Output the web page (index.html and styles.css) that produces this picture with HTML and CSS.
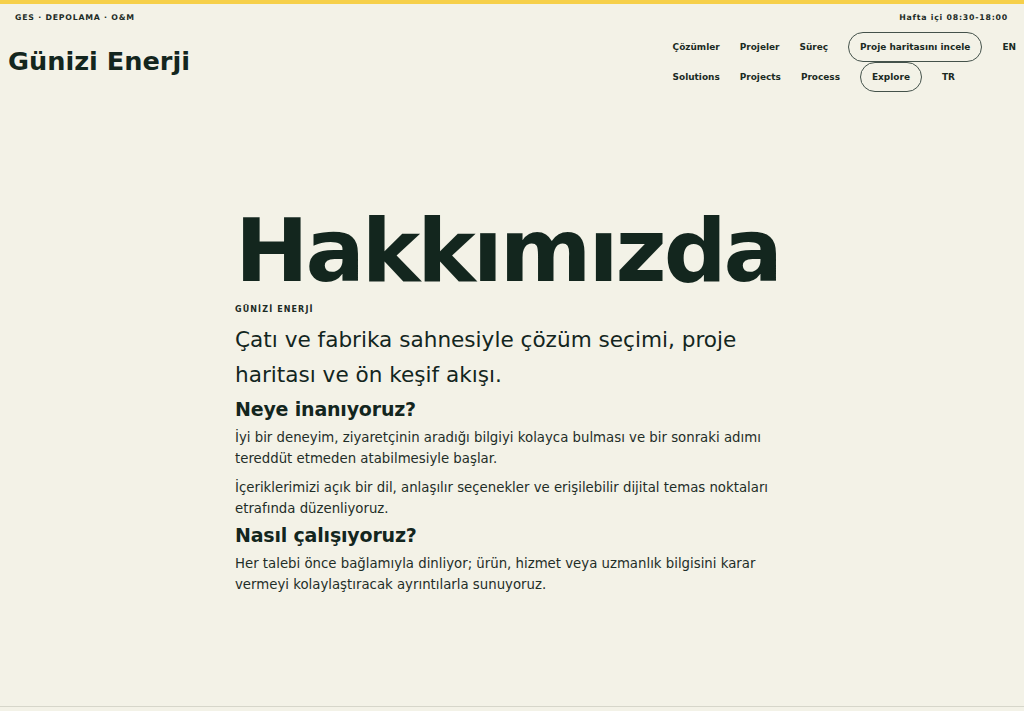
FILE: index.html
```html
<!DOCTYPE html>
<html lang="tr">
<head>
<meta charset="utf-8">
<title>Hakkımızda — Günizi Enerji</title>
<link rel="stylesheet" href="styles.css">
</head>
<body>
<div class="page">
  <div class="topstrip">
    <span class="tag">GES · DEPOLAMA · O&amp;M</span>
    <span class="hours">Hafta içi 08:30-18:00</span>
  </div>
  <header class="header">
    <a class="logo" href="#">Günizi Enerji</a>
    <nav class="nav">
      <div class="nav-row">
        <a href="#">Çözümler</a>
        <a href="#">Projeler</a>
        <a href="#">Süreç</a>
        <a class="pill" href="#">Proje haritasını incele</a>
        <a href="#">EN</a>
      </div>
      <div class="nav-row">
        <a href="#">Solutions</a>
        <a href="#">Projects</a>
        <a href="#">Process</a>
        <a class="pill" href="#">Explore</a>
        <a href="#">TR</a>
      </div>
    </nav>
  </header>
  <main class="main">
    <article class="content">
      <h1 class="title">Hakkımızda</h1>
      <p class="eyebrow">GÜNİZİ ENERJİ</p>
      <p class="lead">Çatı ve fabrika sahnesiyle çözüm seçimi, proje haritası ve ön keşif akışı.</p>
      <h2 class="section-title">Neye inanıyoruz?</h2>
      <p class="body">İyi bir deneyim, ziyaretçinin aradığı bilgiyi kolayca bulması ve bir sonraki adımı tereddüt etmeden atabilmesiyle başlar.</p>
      <p class="body">İçeriklerimizi açık bir dil, anlaşılır seçenekler ve erişilebilir dijital temas noktaları etrafında düzenliyoruz.</p>
      <h2 class="section-title">Nasıl çalışıyoruz?</h2>
      <p class="body">Her talebi önce bağlamıyla dinliyor; ürün, hizmet veya uzmanlık bilgisini karar vermeyi kolaylaştıracak ayrıntılarla sunuyoruz.</p>
    </article>
  </main>
  <footer class="footer"></footer>
</div>
</body>
</html>
```

FILE: styles.css
```css
html, body {
  margin: 0;
  padding: 0;
}
body {
  background: #f3f2e7;
  color: #13261e;
  font-family: "DejaVu Sans", Verdana, sans-serif;
}
a {
  color: inherit;
  text-decoration: none;
}
.page {
  min-height: 100vh;
  display: flex;
  flex-direction: column;
  border-top: 4px solid #f6d04a;
  box-sizing: border-box;
}
.topstrip {
  display: flex;
  justify-content: space-between;
  align-items: center;
  height: 26px;
  padding: 0 16px 0 15px;
  font-size: 7.8px;
  font-weight: 700;
  letter-spacing: 0.1em;
  color: #1c2b25;
}
.header {
  display: flex;
  justify-content: space-between;
  align-items: center;
  padding: 2px 8px 0 8px;
}
.logo {
  font-size: 25.6px;
  font-weight: 700;
  padding-bottom: 2px;
  color: #13261e;
}
.nav {
  display: flex;
  flex-direction: column;
  gap: 0;
}
.nav-row {
  display: flex;
  align-items: center;
  gap: 20px;
  height: 30px;
  font-size: 8.95px;
  font-weight: 700;
  color: #1a2a23;
}
.pill {
  display: flex;
  align-items: center;
  height: 30px;
  box-sizing: border-box;
  padding: 0 11px;
  border: 1px solid #44524b;
  border-radius: 999px;
}
.main {
  flex: 1;
}
.content {
  width: 554px;
  margin: 0 auto;
  padding-top: 115px;
}
.title {
  margin: 0;
  font-size: 88px;
  line-height: 1;
  font-weight: 700;
  letter-spacing: -0.035em;
  color: #13261e;
}
.eyebrow {
  margin: 9px 0 0 0;
  font-size: 8px;
  line-height: 12px;
  font-weight: 700;
  letter-spacing: 0.14em;
  color: #1c2b25;
}
.lead {
  margin: 7px 0 0 0;
  font-size: 21.6px;
  line-height: 1.6;
  color: #13261e;
}
.section-title {
  margin: 4.5px 0 6px 0;
  font-size: 19px;
  line-height: 24px;
  font-weight: 700;
  letter-spacing: -0.01em;
  color: #13261e;
}
.body {
  margin: 0;
  font-size: 13.3px;
  line-height: 21px;
  color: #1f2e28;
}
.body + .body {
  margin-top: 8px;
}
.footer {
  height: 4px;
  border-top: 1px solid #d6d6ca;
}
```
